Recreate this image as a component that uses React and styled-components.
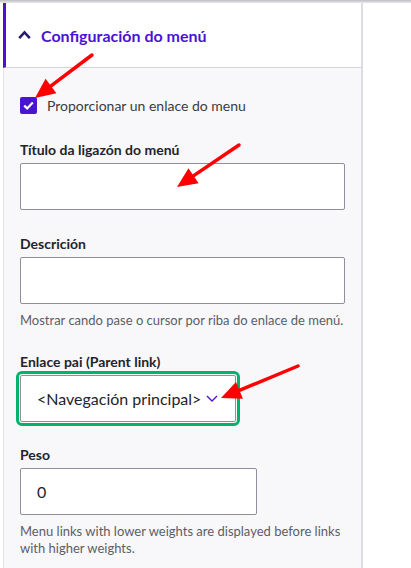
import React from 'react'
import styled, { createGlobalStyle } from 'styled-components'

const GlobalStyle = createGlobalStyle`
  html, body {
    margin: 0;
    padding: 0;
    background: #ffffff;
    font-family: Lato, "Noto Sans", sans-serif;
    color: #232429;
  }
`

const Page = styled.div`
  position: relative;
  width: 411px;
  height: 568px;
  overflow: hidden;
  background: #ffffff;
`

const TopShade = styled.div`
  height: 3px;
  background: linear-gradient(#bdbdc2, #e9e9ee);
`

const Panel = styled.section`
  margin-left: 3px;
  width: 358px;
  height: 565px;
  border-right: 2px solid #dcdce4;
  display: flex;
  flex-direction: column;
`

const Header = styled.div`
  height: 65px;
  box-sizing: border-box;
  border-left: 3px solid #4b12d6;
  border-bottom: 1px solid #d4d4dc;
  background: #ffffff;
  display: flex;
  align-items: center;
  gap: 10px;
  padding-left: 12px;
`

const Title = styled.span`
  font-size: 16px;
  font-weight: 700;
  color: #4b12d6;
`

const Body = styled.div`
  flex: 1;
  background: #f8f8fb;
  border-left: 1px solid #e4e4ea;
  padding: 27px 16px 0 16px;
`

const CheckRow = styled.label`
  display: flex;
  align-items: center;
  gap: 10px;
  height: 20px;
  font-size: 14px;
  color: #3a3b42;
`

const Box = styled.span`
  width: 17px;
  height: 17px;
  border-radius: 2px;
  background: #4a14d4;
  display: flex;
  align-items: center;
  justify-content: center;
`

const Field = styled.div`
  margin-top: ${p => p.$top || 24}px;
`

const Label = styled.div`
  font-size: 14px;
  font-weight: 700;
  line-height: 20px;
  margin-bottom: 3px;
  color: #232429;
`

const Input = styled.div`
  width: ${p => p.$width}px;
  height: 47px;
  box-sizing: border-box;
  background: #ffffff;
  border: 1px solid #8e9099;
  border-radius: 2px;
  display: flex;
  align-items: center;
  padding-left: 16px;
  font-size: 16px;
  color: #232429;
`

const Select = styled(Input)`
  outline: 3px solid #00b26b;
  outline-offset: 1px;
  gap: 5px;
`

const Help = styled.div`
  margin-top: 8px;
  font-size: 13px;
  line-height: 17px;
  color: #5c5d66;
`

const Arrows = styled.svg`
  position: absolute;
  left: 0;
  top: 0;
  pointer-events: none;
`

const Arrow = ({ x1, y1, x2, y2 }) => {
  const dx = x2 - x1
  const dy = y2 - y1
  const len = Math.hypot(dx, dy)
  const ux = dx / len
  const uy = dy / len
  const head = 20
  const half = 9
  const bx = x2 - ux * head
  const by = y2 - uy * head
  const p1 = `${bx - uy * half},${by + ux * half}`
  const p2 = `${bx + uy * half},${by - ux * half}`
  return (
    <g>
      <line x1={x1} y1={y1} x2={bx + ux * 2} y2={by + uy * 2} stroke="#ff0000" strokeWidth="3.5" strokeLinecap="round" />
      <polygon points={`${x2},${y2} ${p1} ${p2}`} fill="#ff0000" />
    </g>
  )
}

const App = () => {
  return (
    <Page>
      <GlobalStyle />
      <TopShade />
      <Panel>
        <Header>
          <svg width="13" height="10" viewBox="0 0 13 10">
            <path d="M1.2 8.2 L6.5 2.4 L11.8 8.2" fill="none" stroke="#2a1c6c" strokeWidth="2.6" />
          </svg>
          <Title>Configuración do menú</Title>
        </Header>
        <Body>
          <CheckRow>
            <Box>
              <svg width="11" height="9" viewBox="0 0 11 9">
                <path d="M1.2 4.6 L4.2 7.4 L9.8 1.6" fill="none" stroke="#ffffff" strokeWidth="2.2" />
              </svg>
            </Box>
            Proporcionar un enlace do menu
          </CheckRow>

          <Field $top={25}>
            <Label>Título da ligazón do menú</Label>
            <Input $width={325} />
          </Field>

          <Field $top={24}>
            <Label>Descrición</Label>
            <Input $width={325} />
            <Help>Mostrar cando pase o cursor por riba do enlace de menú.</Help>
          </Field>

          <Field $top={23}>
            <Label>Enlace pai (Parent link)</Label>
            <Select $width={216}>
              &lt;Navegación principal&gt;
              <svg width="12" height="7" viewBox="0 0 12 7">
                <path d="M1 1 L6 6 L11 1" fill="none" stroke="#4a14d4" strokeWidth="1.4" />
              </svg>
            </Select>
          </Field>

          <Field $top={23}>
            <Label>Peso</Label>
            <Input $width={237}>0</Input>
            <Help>Menu links with lower weights are displayed before links with higher weights.</Help>
          </Field>
        </Body>
      </Panel>
      <Arrows width="411" height="568">
        <Arrow x1={92} y1={55} x2={35} y2={98} />
        <Arrow x1={239} y1={145} x2={177} y2={187} />
        <Arrow x1={298} y1={366} x2={221} y2={398} />
      </Arrows>
    </Page>
  )
}

export default App
